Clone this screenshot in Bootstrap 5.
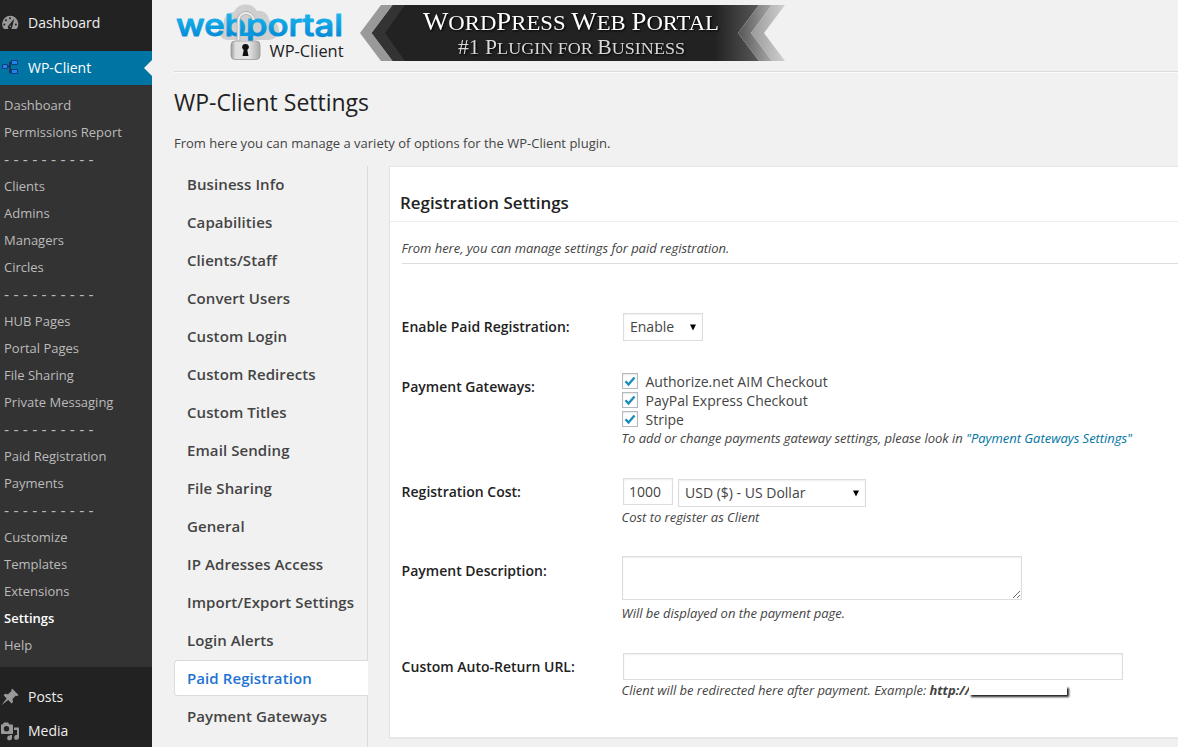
<!DOCTYPE html>
<html lang="en">
<head>
<meta charset="utf-8">
<title>WP-Client Settings</title>
<link href="https://cdn.jsdelivr.net/npm/bootstrap@5.3.0/dist/css/bootstrap.min.css" rel="stylesheet">
<style>
body{font:13px/20px "Open Sans",sans-serif;color:#444;background:#f1f1f1}
.shell{height:747px}
.side{width:152px;background:#222;padding-top:6px}
.side .top{height:34px;font-size:14px;color:#eee;gap:8px}
.side .top svg{width:20px;height:20px}
.side .current{background:#0074a2;color:#fff;margin-top:11px;position:relative}
.side .current::after{content:"";position:absolute;right:0;top:9px;border:8px solid transparent;border-right-color:#f1f1f1;border-left:0}
.submenu{background:#333;padding:7px 4px 8px;margin-bottom:13px}
.submenu a{height:27px;line-height:27px;color:#bbb;text-decoration:none;white-space:nowrap}
.submenu a.on{color:#fff;font-weight:600}
.submenu .dash{font-family:"Liberation Sans",sans-serif;font-size:15.400px}
.main{padding-left:22px;min-width:0}
.brand{height:72px;border-bottom:1px solid #dcdcdc;box-shadow:0 1px #fafafa}
.banner-text{font-family:"Liberation Serif",serif;text-transform:uppercase;filter:drop-shadow(1px 1px 1px #000)}
.line-a{font-size:22px}.line-a .cap{font-size:26px}
.line-b{font-size:17.500px}.line-b .cap{font-size:21px}
h1{font-size:23px;line-height:30px;font-weight:400;color:#222;margin:15px 0 0}
.intro{margin:16px 0 13px;letter-spacing:.01px}
.tabs{width:194px;border-right:1px solid #dbdbdb;height:581px}
.tabs a{height:36px;margin-bottom:2px;padding:0 0 0 13px;line-height:36px;font-size:15px;font-weight:600;letter-spacing:.09px;color:#444;text-decoration:none;white-space:nowrap}
.tabs a.on{background:#fff;border:1px solid #dbdbdb;border-right:0;border-radius:4px 0 0 4px;line-height:34px;padding-left:12px;margin-right:-1px;color:#1e73d2}
.panel{margin-left:21px;height:572px;background:#fff;border:1px solid #e5e5e5;border-right:0;border-radius:0;box-shadow:0 1px 1px rgba(0,0,0,.04);color:#444}
.panel h2{font-size:16.900px;line-height:24px;font-weight:600;color:#222;margin:0;padding:24px 0 6px 10px;border-bottom:1px solid #eee}
.note{margin-left:12px;padding:16px 0 5px;border-bottom:1px solid #ddd;font-style:italic;line-height:20px;letter-spacing:-.035px;text-indent:-.5px}
.fields{margin:49px 0 0 12px}
.field{display:flex}
.field>label{width:220px;flex:none;font-size:14px;line-height:28px;font-weight:600;text-indent:-.4px;color:#222}
.field i{display:block;line-height:20px;white-space:nowrap;letter-spacing:-.03px;text-indent:-.4px}
.field i a{color:#0074a2;text-decoration:none}
.ctl{border:1px solid #ddd;border-radius:0;box-shadow:inset 0 1px 2px rgba(0,0,0,.07);font-size:14px;line-height:20px;color:#444;background-color:#fff;padding:2px 5px;min-height:0}
select.ctl{height:28px;padding:2px 20px 2px 6px;background-image:url("data:image/svg+xml,%3Csvg xmlns='http://www.w3.org/2000/svg' viewBox='0 0 7 7'%3E%3Cpath d='M0 0h7L3.5 7z'/%3E%3C/svg%3E");background-size:6px 7px;background-position:right 6px center}
.opt{height:19px;font-size:14px;gap:7.500px;line-height:19px}
.opt span{width:16px;height:16px;margin-top:-2px;border:1px solid #b4b9be;box-shadow:inset 0 1px 2px rgba(0,0,0,.1);display:flex}
.redact{display:inline-block;position:relative;width:98px;height:9px;vertical-align:0;background:#fff;box-shadow:2px 2px 2px #222;margin-left:-1px}
</style>
</head>
<body class="overflow-hidden">
<div class="shell d-flex">
<nav class="side flex-shrink-0 d-flex flex-column">
  <div class="top d-flex align-items-center flex-shrink-0">
    <svg viewBox="0 0 20 20"><path fill="#999" d="M4 16A8.100 8.100 0 1 1 16.500 16z"/><g fill="#222"><circle cx="10" cy="5.300" r="1"/><circle cx="6" cy="7.300" r="1"/><circle cx="4.300" cy="11.500" r="1"/><circle cx="15.900" cy="11.500" r="1"/><path d="M14.300 5.600 12.200 14a2.200 2.200 0 1 1-3.200-2z"/></g><circle cx="10.300" cy="13.200" r=".8" fill="#999"/></svg>
    <span>Dashboard</span></div>
  <div class="top current d-flex align-items-center flex-shrink-0">
    <svg viewBox="0 0 20 20"><path d="M8 8.500h2V4.500h3M10 8.500v6h3" fill="none" stroke="#17324d" stroke-width="1.500"/><g fill="#2382ee" stroke="#123c80"><path d="M2.500 6.500h5v4h-5zM11.500 2.500h6v4h-6zM11.500 11.500h6v4h-6z"/></g></svg>
    <span>WP-Client</span></div>
  <div class="submenu d-flex flex-column flex-shrink-0">
    <a href="#">Dashboard</a><a href="#">Permissions Report</a><a href="#" class="dash">- - - - - - - - - -</a>
    <a href="#">Clients</a><a href="#">Admins</a><a href="#">Managers</a><a href="#">Circles</a><a href="#" class="dash">- - - - - - - - - -</a>
    <a href="#">HUB Pages</a><a href="#">Portal Pages</a><a href="#">File Sharing</a><a href="#">Private Messaging</a><a href="#" class="dash">- - - - - - - - - -</a>
    <a href="#">Paid Registration</a><a href="#">Payments</a><a href="#" class="dash">- - - - - - - - - -</a>
    <a href="#">Customize</a><a href="#">Templates</a><a href="#">Extensions</a><a href="#" class="on">Settings</a><a href="#">Help</a>
  </div>
  <div class="top d-flex align-items-center flex-shrink-0">
    <svg viewBox="0 0 20 20"><path fill="#999" d="m12.300 1.800 6.200 6.200-1.100 1-1.700-.2-3.200 3.300.5 3-1.400 1.300-3.400-3.400-6.800 5.200 5.200-6.800-3-3.200L5 6.800l3 .5 3.500-3.200-.2-1.500z"/></svg>
    <span>Posts</span></div>
  <div class="top d-flex align-items-center flex-shrink-0">
    <svg viewBox="0 0 20 20"><path fill="#999" fill-rule="evenodd" d="M1 3.500h1.500L4 1.500h4l1.500 2H12c.6 0 1 .4 1 1V12c0 .6-.4 1-1 1H2c-.6 0-1-.4-1-1zM6.500 5a2.700 2.700 0 1 0 0 5.400 2.700 2.700 0 0 0 0-5.400"/><path fill="#999" d="M14 6.500h5v10a2.400 2.400 0 1 1-2-2.400V9h-3zM12 14v3a2.400 2.400 0 1 1-2-2.400V14z"/></svg>
    <span>Media</span></div>
</nav>
<main class="main flex-grow-1">
  <header class="brand">
    <svg width="640" height="70" viewBox="174 0 640 70" class="d-block">
      <defs>
        <linearGradient id="sky" x1="0" x2="0" y1="0" y2="1"><stop offset=".2" stop-color="#18b8ee"/><stop offset=".8" stop-color="#078ed8"/></linearGradient>
        <linearGradient id="steel" x1="0" x2="1"><stop stop-color="#999"/><stop offset=".15" stop-color="#ddd"/><stop offset=".6" stop-color="#e6e6e6"/><stop offset="1" stop-color="#aaa"/></linearGradient>
        <linearGradient id="bar" gradientUnits="userSpaceOnUse" x1="372" x2="785" y1="0" y2="0"><stop stop-color="#222"/><stop offset=".83" stop-color="#222"/><stop offset=".93" stop-color="#555"/><stop offset="1" stop-color="#888"/></linearGradient>
        <linearGradient id="fade" gradientUnits="userSpaceOnUse" x1="738" x2="772" y1="0" y2="0"><stop stop-color="#555"/><stop offset="1" stop-color="#a8a8a8"/></linearGradient>
        <linearGradient id="tip" gradientUnits="userSpaceOnUse" x1="751" x2="785" y1="0" y2="0"><stop stop-color="#999"/><stop offset="1" stop-color="#d0d0d0"/></linearGradient>
      </defs>
      <path fill="#cfcfcf" d="M227 40a9 9 0 0 1-3-17 10 10 0 0 1 10-11 13 13 0 0 1 23-1 10 10 0 0 1 12 9 10 10 0 0 1 0 20z"/>
      <text x="176" y="35.500" font-family="Inter" font-weight="500" font-size="30.500" textLength="167" lengthAdjust="spacingAndGlyphs" fill="url(#sky)" stroke="url(#sky)" stroke-width="1" stroke-linejoin="round">webportal</text>
      <path d="M236 34.300h18" stroke="#0a98de" stroke-width="3.500"/>
      <path d="M238.500 42V21a7.500 7.500 0 0 1 15-1" fill="none" stroke="#aaa" stroke-width="3.500"/><path d="M238.500 42V21a7.500 7.500 0 0 1 15-1" fill="none" stroke="#eee" stroke-width="2"/>
      <rect x="231" y="41" width="29" height="18.500" rx="4" fill="url(#steel)" stroke="#999" stroke-width=".8"/>
      <path d="M245.500 44a3.200 3.200 0 0 1 1.800 6l1.200 6h-6l1.200-6a3.200 3.200 0 0 1 1.800-6" fill="#111"/>
      <text x="269.500" y="57" font-family="Open Sans" font-size="16.500" textLength="74" lengthAdjust="spacingAndGlyphs" fill="#222">WP-Client</text>
      <path d="M360 33 381 5h14l-22 28 22 28h-14z" fill="#999"/>
      <path d="M372 33 393 5H759L738 33l21 28H393z" fill="url(#bar)"/>
      <path d="M372 33 393 5h12L385 33l20 28h-12z" fill="#333"/>
      <path d="M738 33 759 5h13L751 33l21 28h-13z" fill="url(#fade)"/>
      <path d="M751 33 772 5h13L764 33l21 28h-13z" fill="url(#tip)"/>
      <g class="banner-text">
      <text class="line-a" x="423" y="30" textLength="296" lengthAdjust="spacingAndGlyphs" fill="#fff"><tspan class="cap">W</tspan>ord<tspan class="cap">P</tspan>ress <tspan class="cap">W</tspan>eb <tspan class="cap">P</tspan>ortal</text>
      <text class="line-b" x="458" y="54" textLength="227" lengthAdjust="spacingAndGlyphs" fill="#d8d8d8"><tspan class="cap">#1 P</tspan>lugin for <tspan class="cap">B</tspan>usiness</text></g>
    </svg>
  </header>
  <h1>WP-Client Settings</h1>
  <p class="intro">From here you can manage a variety of options for the WP-Client plugin.</p>
  <div class="d-flex">
    <nav class="tabs flex-shrink-0 d-flex flex-column">
      <a href="#">Business Info</a><a href="#">Capabilities</a><a href="#">Clients/Staff</a><a href="#">Convert Users</a><a href="#">Custom Login</a><a href="#">Custom Redirects</a><a href="#">Custom Titles</a><a href="#">Email Sending</a><a href="#">File Sharing</a><a href="#">General</a><a href="#">IP Adresses Access</a><a href="#">Import/Export Settings</a><a href="#">Login Alerts</a><a href="#" class="on">Paid Registration</a><a href="#">Payment Gateways</a>
    </nav>
    <section class="panel card flex-grow-1">
      <h2>Registration Settings</h2>
      <div class="note">From here, you can manage settings for paid registration.</div>
      <form class="fields">
        <div class="field" style="height:60px"><label>Enable Paid Registration:</label>
          <select class="form-select ctl" style="width:80px;margin-left:1px"><option>Enable</option></select></div>
        <div class="field" style="height:105px"><label>Payment Gateways:</label>
          <div style="margin-top:-1px">
            <div class="opt d-flex align-items-center"><span><svg viewBox="0 0 14 14"><path d="m2.500 7.200 3 3.300 6-7" fill="none" stroke="#1e8cbe" stroke-width="2.400"/></svg></span>Authorize.net AIM Checkout</div>
            <div class="opt d-flex align-items-center"><span><svg viewBox="0 0 14 14"><path d="m2.500 7.200 3 3.300 6-7" fill="none" stroke="#1e8cbe" stroke-width="2.400"/></svg></span>PayPal Express Checkout</div>
            <div class="opt d-flex align-items-center"><span><svg viewBox="0 0 14 14"><path d="m2.500 7.200 3 3.300 6-7" fill="none" stroke="#1e8cbe" stroke-width="2.400"/></svg></span>Stripe</div>
            <i style="margin-top:-1px">To add or change payments gateway settings, please look in <a href="#">"Payment Gateways Settings"</a></i>
          </div></div>
        <div class="field" style="height:79px"><label>Registration Cost:</label>
          <div><div class="d-flex" style="margin-left:1px;gap:5px;height:29px"><input class="form-control ctl" style="width:50px;height:27px" value="1000"><select class="form-select ctl" style="width:188px;margin-top:1px"><option>USD ($) - US Dollar</option></select></div>
          <i>Cost to register as Client</i></div></div>
        <div class="field" style="height:96px"><label>Payment Description:</label>
          <div><textarea class="form-control ctl" style="width:400px;height:44px;margin:-1px 0 3px"></textarea>
          <i>Will be displayed on the payment page.</i></div></div>
        <div class="field"><label>Custom Auto-Return URL:</label>
          <div><input class="form-control ctl" style="width:500px;height:27px;margin-left:1px">
          <i>Client will be redirected here after payment. Example: <b>http://</b><span class="redact"></span></i></div></div>
      </form>
    </section>
  </div>
</main>
</div>
<script src="https://cdn.jsdelivr.net/npm/bootstrap@5.3.0/dist/js/bootstrap.bundle.min.js"></script>
</body>
</html>
